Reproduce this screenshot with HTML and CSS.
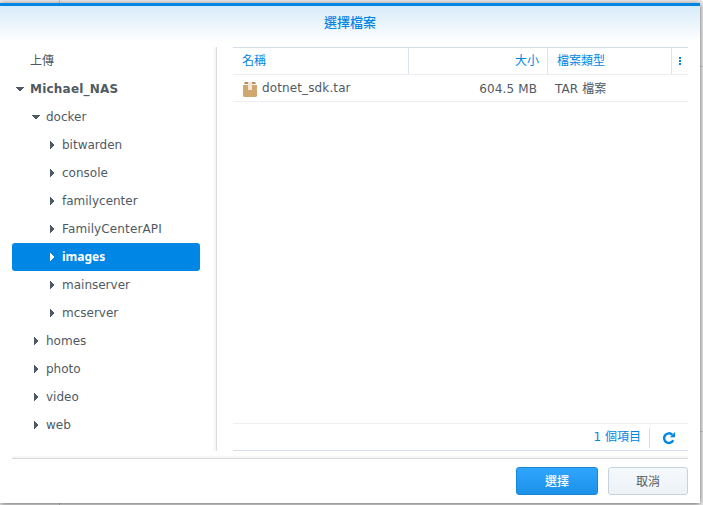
FILE: index.html
```html
<!DOCTYPE html>
<html lang="zh-Hant">
<head>
<meta charset="utf-8">
<title>選擇檔案</title>
<link rel="stylesheet" href="styles.css">
</head>
<body>
<div class="dialog">
  <header class="title">選擇檔案</header>
  <main class="content">
    <nav class="tree">
      <div class="node root"><span class="label cjk">上傳</span></div>
      <div class="node root server"><svg class="arrow" viewBox="0 0 8 8"><path d="M0 2h8v1H7v1H6v1H5v1H3V5H2V4H1V3H0z"/></svg><span class="label">Michael_NAS</span></div>
      <div class="node share"><svg class="arrow" viewBox="0 0 8 8"><path d="M0 2h8v1H7v1H6v1H5v1H3V5H2V4H1V3H0z"/></svg><span class="label">docker</span></div>
      <div class="node folder"><svg class="arrow" viewBox="0 0 8 8"><path d="M2 0h1v1h1v1h1v1h1v2H5v1H4v1H3v1H2z"/></svg><span class="label">bitwarden</span></div>
      <div class="node folder"><svg class="arrow" viewBox="0 0 8 8"><path d="M2 0h1v1h1v1h1v1h1v2H5v1H4v1H3v1H2z"/></svg><span class="label">console</span></div>
      <div class="node folder"><svg class="arrow" viewBox="0 0 8 8"><path d="M2 0h1v1h1v1h1v1h1v2H5v1H4v1H3v1H2z"/></svg><span class="label">familycenter</span></div>
      <div class="node folder"><svg class="arrow" viewBox="0 0 8 8"><path d="M2 0h1v1h1v1h1v1h1v2H5v1H4v1H3v1H2z"/></svg><span class="label wide">FamilyCenterAPI</span></div>
      <div class="node folder selected"><svg class="arrow" viewBox="0 0 8 8"><path d="M2 0h1v1h1v1h1v1h1v2H5v1H4v1H3v1H2z"/></svg><span class="label">images</span></div>
      <div class="node folder"><svg class="arrow" viewBox="0 0 8 8"><path d="M2 0h1v1h1v1h1v1h1v2H5v1H4v1H3v1H2z"/></svg><span class="label">mainserver</span></div>
      <div class="node folder"><svg class="arrow" viewBox="0 0 8 8"><path d="M2 0h1v1h1v1h1v1h1v2H5v1H4v1H3v1H2z"/></svg><span class="label">mcserver</span></div>
      <div class="node share"><svg class="arrow" viewBox="0 0 8 8"><path d="M2 0h1v1h1v1h1v1h1v2H5v1H4v1H3v1H2z"/></svg><span class="label">homes</span></div>
      <div class="node share"><svg class="arrow" viewBox="0 0 8 8"><path d="M2 0h1v1h1v1h1v1h1v2H5v1H4v1H3v1H2z"/></svg><span class="label">photo</span></div>
      <div class="node share"><svg class="arrow" viewBox="0 0 8 8"><path d="M2 0h1v1h1v1h1v1h1v2H5v1H4v1H3v1H2z"/></svg><span class="label">video</span></div>
      <div class="node share"><svg class="arrow" viewBox="0 0 8 8"><path d="M2 0h1v1h1v1h1v1h1v2H5v1H4v1H3v1H2z"/></svg><span class="label">web</span></div>
    </nav>
    <section class="files">
      <div class="grid-row head">
        <div class="cell">名稱</div>
        <div class="cell size">大小</div>
        <div class="cell">檔案類型</div>
        <div class="cell menu"><svg width="2" height="8" viewBox="0 0 2 8"><path d="M0 0h2v2H0zM0 3h2v2H0zM0 6h2v2H0z"/></svg></div>
      </div>
      <div class="grid-row file">
        <div class="cell name"><svg class="box" viewBox="0 0 14 15"><path fill="#b98d5b" d="M2 0h10l1 2H1z"/><path fill="#d0a76e" d="M0 3h14v11l-1 1H1l-1-1z"/><path fill="#f1e6d6" d="M5 0h4v8H5z"/></svg><span class="filename">dotnet_sdk.tar</span></div>
        <div class="cell size">604.5 MB</div>
        <div class="cell type">TAR 檔案</div>
      </div>
      <footer class="status">
        <span class="count">1 個項目</span>
        <span class="rule"></span>
        <svg class="refresh" viewBox="0 0 12 12"><path d="M10.2 8.3A4.8 4.8 0 1 1 9.2 2.6" fill="none" stroke="#0086e5" stroke-width="2.4"/><path d="M12 0v5.2H6.8z" fill="#0086e5"/></svg>
      </footer>
    </section>
  </main>
  <div class="actions">
    <button class="btn primary">選擇</button>
    <button class="btn">取消</button>
  </div>
</div>
</body>
</html>
```
FILE: styles.css
```css
* { box-sizing: border-box; }
body {
  margin: 0;
  height: 505px;
  padding-top: 3px;
  overflow: hidden;
  background:
    linear-gradient(#c4c8cc, #c4c8cc) 59px 0 / 1px 505px no-repeat,
    linear-gradient(#d0d3d6, #d0d3d6) 700px 66px / 3px 1px no-repeat,
    linear-gradient(#d0d3d6, #d0d3d6) 700px 431px / 3px 1px no-repeat,
    #f0f0f0;
  color: #505a64;
  font: 12px/28px "DejaVu Sans", "Noto Sans CJK TC", sans-serif;
}
.dialog {
  width: 700px;
  height: 500px;
  border-top: 3px solid #0086e5;
  background: linear-gradient(#d7ebf9, #fff 36px) #fff;
  box-shadow: 0 1px 6px rgba(0, 0, 0, .6);
}
.title {
  height: 41px;
  line-height: 34px;
  text-align: center;
  font-size: 13px;
  font-weight: 500;
  color: #0086e5;
}
.content { display: flex; height: 404px; padding: 0 12px; }
.tree {
  width: 205px;
  margin-right: 16px;
  padding-right: 17px;
  background: linear-gradient(to left, #dcdcdc 1px, #f2f2f2 1px, #fff 4px);
}
.node { display: flex; align-items: center; height: 28px; line-height: 28px; }
.root { padding-left: 4px; }
.share { padding-left: 20px; }
.folder { padding-left: 36px; }
.arrow { width: 8px; height: 8px; margin-right: 6px; fill: #505a64; shape-rendering: crispEdges; }
.label { height: 28px; }
.wide { letter-spacing: .12px; }
.cjk { margin-left: 14px; }
.server { font-weight: bold; letter-spacing: .22px; }
.selected { background: #0086e5; color: #fff; border-radius: 3px; font-family: "Noto Sans", sans-serif; font-weight: bold; letter-spacing: 0; }
.selected .arrow { fill: #fff; }
.files { width: 455px; display: flex; flex-direction: column; border-top: 1px solid #d2deea; border-bottom: 1px solid #d2deea; }
.grid-row { display: grid; grid-template-columns: 176px 139px 124px 16px; height: 27px; line-height: 26px; border-bottom: 1px solid #ebeff2; }
.cell { padding: 0 9px; border-right: 1px solid #d9e6f2; white-space: nowrap; }
.head { color: #0086e5; }
.size { text-align: right; }
.head .size { padding-right: 8px; }
.file { height: 27px; line-height: 28px; letter-spacing: .12px; }
.file .cell { height: 26px; border-color: transparent; }
.file .size { padding-right: 10px; }
.file .type { padding-left: 7px; }
.menu { display: flex; align-items: center; padding: 0 0 0 7px; border: 0; fill: #0086e5; }
.name { display: flex; align-items: center; }
.box { width: 14px; height: 15px; margin: 3px 5px 0 1px; }
.status { display: flex; align-items: center; justify-content: flex-end; height: 27px; margin-top: auto; padding-right: 13px; border-top: 1px solid #ebeff2; color: #0086e5; }
.rule { width: 1px; height: 20px; margin: 2px 13px 0 8px; background: #d2deea; }
.refresh { width: 12px; height: 12px; margin-top: 2px; }
.actions {
  display: flex;
  justify-content: flex-end;
  gap: 10px;
  margin: 4px 12px 0;
  padding-top: 12px;
  background: linear-gradient(#fff, #f3f3f3 3px, #dcdcdc 3px, #dcdcdc 4px, #fff 4px);
}
.btn { width: 80px; height: 28px; padding: 2px 0 0; border: 1px solid #c8d2dc; border-radius: 3px; background: linear-gradient(#f5f9fc, #edf2f7); color: #505a64; font: inherit; line-height: 24px; }
.primary { width: 82px; border-color: #1586d8; background: linear-gradient(#30a5ff, #1b91e8); color: #fff; font-weight: 500; }
```
